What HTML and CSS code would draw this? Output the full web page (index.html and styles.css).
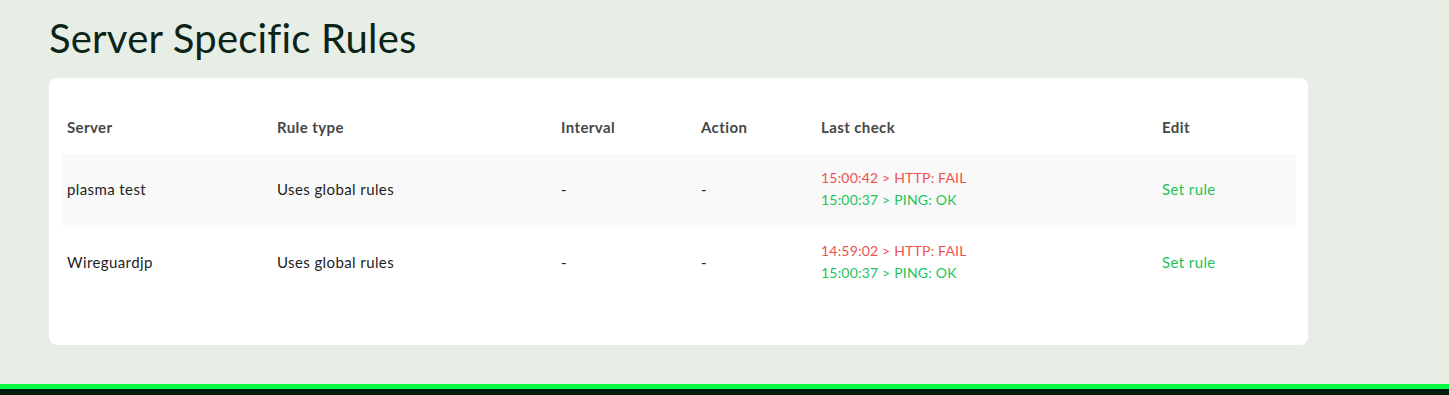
FILE: index.html
```html
<!DOCTYPE html>
<html>
<head>
<meta charset="utf-8">
<link rel="stylesheet" href="styles.css">
</head>
<body>
<main class="page">
  <h1 class="title">Server Specific Rules</h1>
  <section class="card">
    <table class="rules">
      <colgroup>
        <col class="c-server"><col class="c-type"><col class="c-interval"><col class="c-action"><col class="c-check"><col class="c-edit">
      </colgroup>
      <thead>
        <tr><th>Server</th><th>Rule type</th><th>Interval</th><th>Action</th><th>Last check</th><th>Edit</th></tr>
      </thead>
      <tbody>
        <tr class="stripe">
          <td>plasma test</td><td>Uses global rules</td><td>-</td><td>-</td>
          <td class="check"><div class="fail">15:00:42 &gt; HTTP: FAIL</div><div class="ok">15:00:37 &gt; PING: OK</div></td>
          <td><a class="link" href="#">Set rule</a></td>
        </tr>
        <tr>
          <td>Wireguardjp</td><td>Uses global rules</td><td>-</td><td>-</td>
          <td class="check"><div class="fail">14:59:02 &gt; HTTP: FAIL</div><div class="ok">15:00:37 &gt; PING: OK</div></td>
          <td><a class="link" href="#">Set rule</a></td>
        </tr>
      </tbody>
    </table>
  </section>
</main>
<footer class="footer"></footer>
</body>
</html>
```
FILE: styles.css
```css
html, body {
  margin: 0;
  padding: 0;
}
body {
  background: #e6eee6;
  font-family: "Lato", "Open Sans", sans-serif;
  color: #1e1e1e;
  height: 395px;
  display: flex;
  flex-direction: column;
}
.page {
  padding: 0 49px;
  flex: 1;
  width: 1259px;
}
.title {
  margin: 0;
  padding-top: 14px;
  height: 78px;
  box-sizing: border-box;
  font-size: 40px;
  font-weight: 400;
  letter-spacing: 0.2px;
  color: #0b2417;
  line-height: 48px;
}
.card {
  background: #fff;
  border-radius: 8px;
  padding: 24px 13px 45px;
  height: 267px;
  box-sizing: border-box;
}
.rules {
  width: 100%;
  border-collapse: collapse;
  table-layout: fixed;
  font-size: 15px;
  letter-spacing: 0.4px;
}
.c-server { width: 210px; }
.c-type { width: 284px; }
.c-interval { width: 140px; }
.c-action { width: 120px; }
.c-check { width: 341px; }
.c-edit { width: 139px; }
.rules th {
  text-align: left;
  font-weight: 700;
  color: #474747;
  padding: 0 5px 2px;
  height: 52px;
  box-sizing: border-box;
}
.rules td {
  padding: 0 5px 3px;
  height: 73px;
  box-sizing: border-box;
  vertical-align: middle;
}
.stripe td {
  background: #f9f9f9;
}
.rules td.check {
  font-size: 14px;
  letter-spacing: 0.2px;
}
.fail, .ok {
  line-height: 22px;
}
.fail { color: #f0534f; }
.ok { color: #22c35a; }
.link {
  color: #22c35a;
  text-decoration: none;
}
.footer {
  height: 11px;
  border-top: 5px solid #00ff44;
  background: #001e10;
  box-sizing: border-box;
}
```
